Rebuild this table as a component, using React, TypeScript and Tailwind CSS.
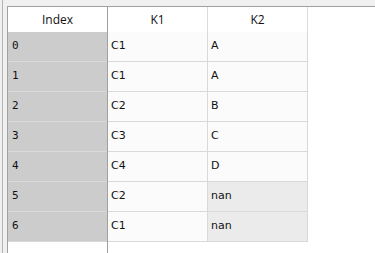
import React from "react";

type Row = { idx: string; k1: string; k2: string; missing?: boolean };

const rows: Row[] = [
  { idx: "0", k1: "C1", k2: "A" },
  { idx: "1", k1: "C1", k2: "A" },
  { idx: "2", k1: "C2", k2: "B" },
  { idx: "3", k1: "C3", k2: "C" },
  { idx: "4", k1: "C4", k2: "D" },
  { idx: "5", k1: "C2", k2: "nan", missing: true },
  { idx: "6", k1: "C1", k2: "nan", missing: true },
];

const headFont = { fontFamily: '"Open Sans", "Noto Sans", sans-serif' };
const cellFont = { fontFamily: '"DejaVu Sans", Verdana, sans-serif' };
const monoFont = { fontFamily: '"DejaVu Sans Mono", "Liberation Mono", monospace' };

export default function App() {
  return (
    <div className="flex h-[253px] w-[375px] overflow-hidden bg-[#f0f0f0]">
      {/* outer frame */}
      <div className="w-[2px] shrink-0" />
      <div className="w-px shrink-0 bg-[#b4b4b4]" />
      <div className="flex flex-1 flex-col pl-[4px] pt-[6px]">
        <div className="flex flex-1 border-l border-t border-[#a0a0a0] bg-white">
          {/* frozen index column */}
          <div className="flex w-[100px] shrink-0 flex-col border-r border-[#a0a0a0]">
            <div
              className="flex h-[25px] items-center justify-center bg-white text-[12px] text-[#111]"
              style={headFont}
            >
              Index
            </div>
            {rows.map((r) => (
              <div
                key={r.idx}
                className="box-border flex h-[30px] items-center border-b border-[#d9d9d9] bg-[#cccccc] pl-[4px] pb-[1px] text-[11px] text-[#111]"
                style={monoFont}
              >
                {r.idx}
              </div>
            ))}
          </div>

          {/* data columns */}
          <div className="flex flex-col">
            <div className="flex h-[25px]" style={headFont}>
              <div className="flex w-[100px] items-center justify-center border-r border-[#dcdcdc] bg-white text-[12px] text-[#111]">
                K1
              </div>
              <div className="flex w-[100px] items-center justify-center border-r border-[#dcdcdc] bg-white text-[12px] text-[#111]">
                K2
              </div>
            </div>
            {rows.map((r) => (
              <div key={r.idx} className="flex h-[30px] text-[11px] text-[#111]" style={cellFont}>
                <div className="box-border flex w-[100px] items-center border-b border-r border-[#d9d9d9] bg-[#fbfbfb] pl-[3px] pb-[1px]">
                  {r.k1}
                </div>
                <div
                  className={
                    r.missing
                      ? "box-border flex w-[100px] items-center border-b border-r border-[#d9d9d9] bg-[#ebebeb] pl-[3px] pb-[1px]"
                      : "box-border flex w-[100px] items-center border-b border-r border-[#d9d9d9] bg-[#fbfbfb] pl-[3px] pb-[1px]"
                  }
                >
                  {r.k2}
                </div>
              </div>
            ))}
          </div>
        </div>
      </div>
    </div>
  );
}
